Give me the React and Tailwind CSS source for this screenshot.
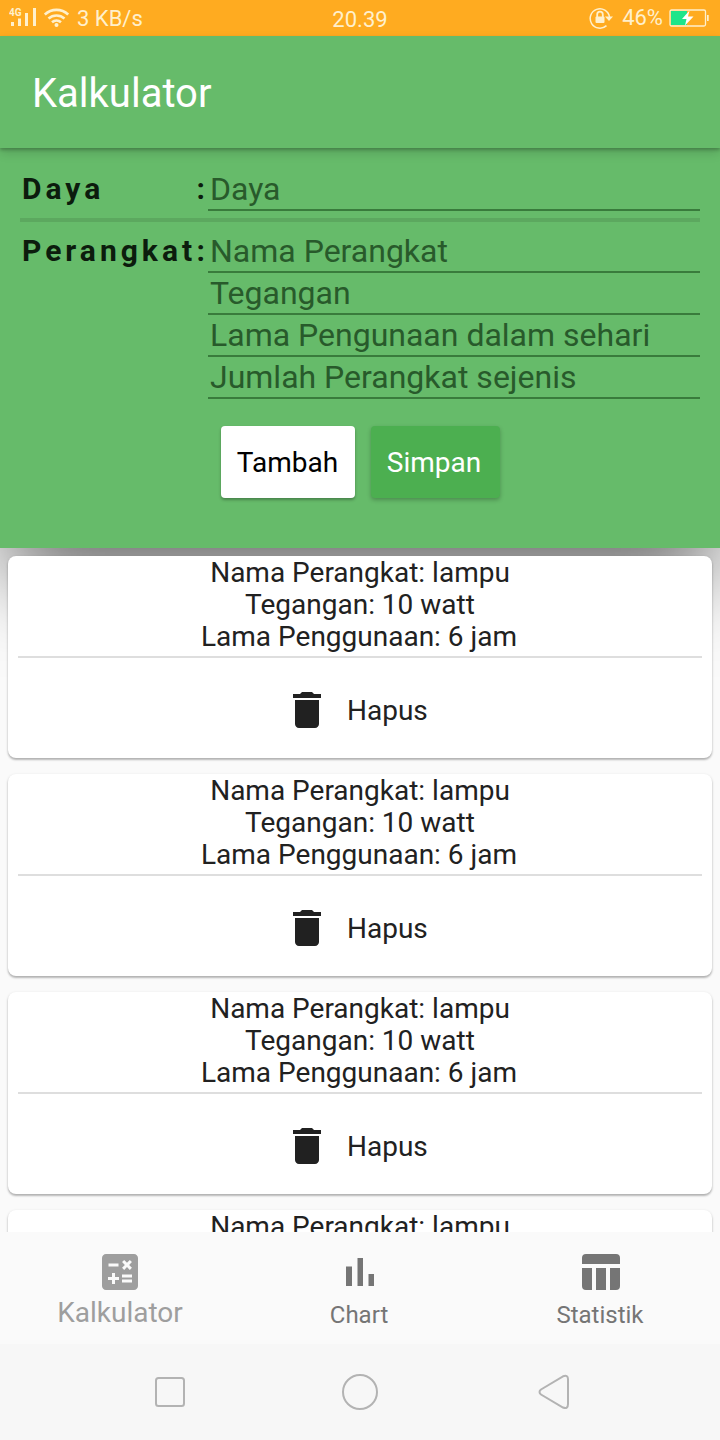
import React from "react";

const fields = ["Nama Perangkat", "Tegangan", "Lama Pengunaan dalam sehari", "Jumlah Perangkat sejenis"];

function StatusBar() {
  return (
    <div className="flex h-9 shrink-0 items-center justify-between bg-[#ffab20] text-[22px] text-[#fff0cc]">
      <div className="flex w-[240px] items-center pl-[9px]">
        <svg width="28" height="20" viewBox="0 0 28 20" fill="currentColor">
          <text x="0" y="7.5" fontSize="10" fontWeight="700" fontFamily="Roboto, sans-serif">4G</text>
          <rect x="2" y="14" width="3" height="4" />
          <rect x="9" y="10.5" width="3" height="7.5" />
          <rect x="16" y="5" width="3" height="13" />
          <rect x="24" y="0" width="3" height="18" />
        </svg>
        <svg className="ml-[7px]" width="25" height="20" viewBox="0 0 25 20" fill="none" stroke="currentColor" strokeWidth="2.6">
          <path d="M0.800 6.500A17 17 0 0 1 24.200 6.500M4.500 10.500A12 12 0 0 1 20.500 10.500M8 14.300A7 7 0 0 1 17 14.300" />
          <circle cx="12.500" cy="17" r="2" fill="currentColor" stroke="none" />
        </svg>
        <span className="ml-2 whitespace-nowrap">3 KB/s</span>
      </div>
      <span className="mt-[3px]">20.39</span>
      <div className="flex w-[240px] items-center justify-end pr-[11px]">
        <svg width="26" height="22" viewBox="0 0 26 22" fill="none" stroke="currentColor" strokeWidth="1.500">
          <path d="M17.500 18.600A9.700 9.700 0 1 1 20.500 10" />
          <path d="M16 9.500h8l-4 4.500z" fill="currentColor" stroke="none" />
          <rect x="6.500" y="9.500" width="9" height="6.500" rx="1" fill="currentColor" stroke="none" />
          <path d="M8.200 10V7.500a2.800 2.800 0 0 1 5.600 0V10" strokeWidth="1.800" />
        </svg>
        <span className="-mt-px ml-[7px]">46%</span>
        <svg className="ml-1.5" width="40" height="18" viewBox="0 0 40 18">
          <rect x="1" y="1" width="35.500" height="16" rx="1.500" fill="none" stroke="currentColor" strokeWidth="1.300" />
          <rect x="2" y="2" width="16" height="14" fill="#1de58a" />
          <path d="M20.500 1.500L13 10h4.500L16 16.500l8.500-9H19z" fill="#fff" />
          <rect x="38" y="6" width="1.700" height="6" fill="currentColor" />
        </svg>
      </div>
    </div>
  );
}

function Field({ label }) {
  return (
    <div className="flex h-[42px] items-center border-b-2 border-[#397b3c] pl-0.5 text-[32px] leading-[40px] text-[#285a2b]">
      {label}
    </div>
  );
}

function Label({ children }) {
  return (
    <div className="flex h-[38px] w-[188px] items-center justify-between pl-0.5 text-[30px] font-bold tracking-[4px] text-[#0c1c0d]">
      <span>{children}</span>
      <span className="-mr-px">:</span>
    </div>
  );
}

function Card() {
  return (
    <div className="mx-2 h-[202px] shrink-0 rounded-lg bg-white px-2.5 shadow-[0_2px_2px_rgba(0,0,0,0.2),0_1px_3px_rgba(0,0,0,0.16)]">
      <div className="flex h-[100px] flex-col items-center pt-px text-[28px] leading-8">
        <span>Nama Perangkat: lampu</span>
        <span>Tegangan: 10 watt</span>
        <span className="pr-0.5">Lama Penggunaan: 6 jam</span>
      </div>
      <div className="h-0.5 bg-[#dedede]" />
      <div className="flex h-[100px] items-center pl-[265px] pt-1 text-[28px]">
        <svg width="48" height="48" viewBox="0 0 24 24" fill="#212121">
          <path d="M6 19c0 1.100.9 2 2 2h8c1.100 0 2-.9 2-2V7H6v12zM19 4h-3.500l-1-1h-5l-1 1H5v2h14V4z" />
        </svg>
        <span className="ml-4 pt-0.5">Hapus</span>
      </div>
    </div>
  );
}

export default function App() {
  return (
    <div className="flex h-[1440px] w-[720px] flex-col overflow-hidden bg-[#fafafa] font-['Roboto',sans-serif] text-[#212121]">
      <StatusBar />
      <header className="relative z-10 flex h-28 shrink-0 items-center bg-[#66bb6a] pl-8 pt-[3px] text-[40px] text-white shadow-[0_2px_3px_rgba(0,0,0,0.22),0_5px_10px_rgba(0,0,0,0.14)]">
        Kalkulator
      </header>
      <section className="h-[400px] shrink-0 bg-[#66bb6a] px-5 pt-[21px] shadow-[0_40px_80px_-8px_rgba(0,0,0,0.58)]">
        <div className="flex">
          <Label>Daya</Label>
          <div className="flex-1"><Field label="Daya" /></div>
        </div>
        <div className="mt-[7px] h-1 bg-[#5ca85f]" />
        <div className="mt-[9px] flex">
          <Label>Perangkat</Label>
          <div className="flex-1">
            {fields.map((f) => <Field key={f} label={f} />)}
          </div>
        </div>
        <div className="mt-[27px] flex justify-center gap-4 text-[28px]">
          <button className="h-[72px] w-[134px] rounded bg-white pt-0.5 text-black shadow-[0_2px_3px_rgba(0,0,0,0.3)]">Tambah</button>
          <button className="h-[72px] w-[129px] rounded bg-[#4caf50] pr-0.5 pt-0.5 text-white shadow-[0_2px_4px_rgba(0,0,0,0.25)]">Simpan</button>
        </div>
      </section>
      <main className="relative flex h-[684px] shrink-0 flex-col gap-4 overflow-hidden pt-2">
        <Card />
        <Card />
        <Card />
        <Card />
      </main>
      <nav className="relative grid h-28 shrink-0 grid-cols-3 bg-[#fafafa] text-2xl leading-7 text-[#757575]">
        <div className="flex flex-col items-center pt-4 text-[#9e9e9e]">
          <svg width="48" height="48" viewBox="0 0 24 24" fill="currentColor">
            <path d="M19 3H5c-1.100 0-2 .9-2 2v14c0 1.100.9 2 2 2h14c1.100 0 2-.9 2-2V5c0-1.100-.9-2-2-2zM13.030 7.060L14.090 6l1.410 1.410L16.910 6l1.060 1.060-1.410 1.410 1.410 1.410-1.060 1.060-1.410-1.400-1.410 1.410-1.060-1.060 1.410-1.410-1.410-1.420zM6.250 7.720h5v1.500h-5v-1.500zM11.500 16h-2v2H8v-2H6v-1.500h2v-2h1.500v2h2V16zm6.500 1.250h-5v-1.500h5v1.500zm0-2.500h-5v-1.500h5v1.500z" />
          </svg>
          <span className="mt-px text-[28px] leading-8">Kalkulator</span>
        </div>
        <div className="flex flex-col items-center pt-4">
          <svg width="48" height="48" viewBox="0 0 48 48" fill="currentColor">
            <path d="M10 18.500h6V38h-6zM21.500 10h5.500v28h-5.500zM32.500 26H38v12h-5.500z" />
          </svg>
          <span className="mt-[5px] pr-0.5">Chart</span>
        </div>
        <div className="flex flex-col items-center pt-4">
          <svg width="48" height="48" viewBox="0 0 48 48" fill="currentColor">
            <path d="M6 16v-6a4 4 0 0 1 4-4h30a4 4 0 0 1 4 4v6zM6 20h10v22h-6a4 4 0 0 1-4-4zM20 20h10v22H20zM34 20h10v18a4 4 0 0 1-4 4h-6z" />
          </svg>
          <span className="mt-[5px]">Statistik</span>
        </div>
      </nav>
      <footer className="flex h-24 shrink-0 items-center bg-[#f7f7f7] pl-[154px]">
        <svg width="32" height="40" viewBox="0 0 32 40" fill="none" stroke="#b3b3b3" strokeWidth="2">
          <rect x="2" y="6" width="28" height="28" rx="2.500" />
        </svg>
        <svg className="ml-[154px]" width="40" height="40" viewBox="0 0 40 40" fill="none" stroke="#b3b3b3" strokeWidth="2">
          <circle cx="20" cy="20" r="17" />
        </svg>
        <svg className="ml-[154px]" width="40" height="40" viewBox="0 0 40 40" fill="none" stroke="#b3b3b3" strokeWidth="2">
          <path d="M7 17.500L29 4.300Q34 2.500 34 7V32Q34 37.500 29 35.500L7 22.500Q4 20 7 17.500Z" />
        </svg>
      </footer>
    </div>
  );
}
